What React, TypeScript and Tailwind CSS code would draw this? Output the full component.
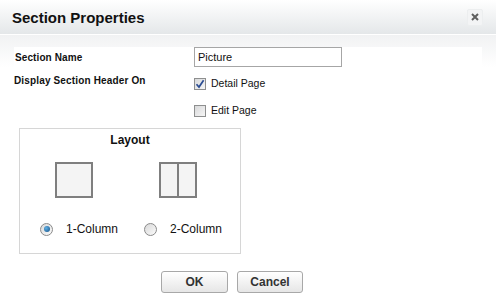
import { useState } from "react";

const Checkbox = ({ checked }: { checked: boolean }) => (
    <span className="flex items-center justify-center w-[12px] h-[12px] border border-[#8e8f8f] bg-[linear-gradient(135deg,#d8d9da,#f6f6f6)] shrink-0">
        {checked && (
            <svg width="10" height="10" viewBox="0 0 10 10">
                <path d="M1.5 5.2 L4 8 L8.6 1.2" fill="none" stroke="#2b4c92" strokeWidth="1.7" />
            </svg>
        )}
    </span>
);

const Radio = ({ checked }: { checked: boolean }) => (
    <span className="flex items-center justify-center w-[13px] h-[13px] rounded-full border border-[#8a8a8a] bg-[linear-gradient(135deg,#d9d9d9,#fbfbfb)] shrink-0">
        {checked && (
            <span className="w-[6px] h-[6px] rounded-full bg-[radial-gradient(circle_at_35%_35%,#5fb0e4,#134f86)]" />
        )}
    </span>
);

const App = () => {
    const [columns, setColumns] = useState(1);

    return (
        <div className="w-[496px] h-[308px] flex flex-col bg-white font-['Liberation_Sans',Arial,sans-serif] text-[#111]">
            <header className="flex items-center justify-between h-[35px] pl-[12px] pr-[13px] border-b border-white bg-[linear-gradient(#ffffff,#e4e7e9)]">
                <h1 className="text-[15px] font-bold leading-none">Section Properties</h1>
                <button className="flex items-center justify-center w-[16px] h-[17px] rounded-[2px] bg-[#f3f4f5] border border-[#eceeef]">
                    <svg width="8" height="8" viewBox="0 0 8 8">
                        <path d="M1 1 L7 7 M7 1 L1 7" stroke="#5f5f5f" strokeWidth="2" />
                    </svg>
                </button>
            </header>
            <main className="flex-1 px-[14px] pt-[12px] bg-[linear-gradient(#f1f2f3,#ffffff_32px)]">
                <div className="bg-white">
                    <div className="flex items-center h-[20px]">
                        <span className="w-[180px] pl-[1px] text-[10px] font-bold tracking-[0.1px]">Section Name</span>
                        <input
                            defaultValue="Picture"
                            className="w-[148px] h-[20px] px-[3px] border border-[#a6a6a6] text-[11px] outline-none"
                        />
                    </div>
                    <div className="flex mt-[9px]">
                        <span className="w-[180px] text-[10px] leading-[10px] font-bold tracking-[0.15px]">
                            Display Section Header On
                        </span>
                        <div className="flex flex-col gap-[15px] mt-[2px]">
                            <label className="flex items-center gap-[5px] h-[12px] text-[10.5px]">
                                <Checkbox checked />
                                Detail Page
                            </label>
                            <label className="flex items-center gap-[5px] h-[12px] text-[10.5px]">
                                <Checkbox checked={false} />
                                Edit Page
                            </label>
                        </div>
                    </div>
                    <section className="w-[222px] h-[126px] ml-[5px] mt-[11px] border border-[#d6d6d6] pt-[4px] pl-[20px]">
                        <h3 className="text-center text-[12px] leading-[14px] font-bold pr-[20px]">Layout</h3>
                        <div className="flex mt-[15px]">
                            <div className="w-[104px] shrink-0" onClick={() => setColumns(1)}>
                                <div className="ml-[15px] w-[38px] h-[36px] border-2 border-[#7f7f7f] bg-[#f4f4f4]" />
                                <div className="flex items-center gap-[13px] mt-[24px] h-[14px] text-[12px]">
                                    <Radio checked={columns === 1} />
                                    1-Column
                                </div>
                            </div>
                            <div className="w-[90px] shrink-0" onClick={() => setColumns(2)}>
                                <div className="flex ml-[15px] w-[38px] h-[36px] border-2 border-[#7f7f7f] bg-[#f4f4f4]">
                                    <div className="flex-1 border-r-2 border-[#7f7f7f]" />
                                    <div className="flex-1" />
                                </div>
                                <div className="flex items-center gap-[13px] mt-[24px] h-[14px] text-[12px]">
                                    <Radio checked={columns === 2} />
                                    2-Column
                                </div>
                            </div>
                        </div>
                    </section>
                    <div className="flex gap-[9px] ml-[147px] mt-[17px]">
                        <button className="w-[67px] h-[22px] rounded-[3px] border border-[#a8a8a8] bg-[linear-gradient(#ffffff,#e6e6e6)] text-[12px] font-bold text-[#333]">
                            OK
                        </button>
                        <button className="w-[66px] h-[22px] rounded-[3px] border border-[#a8a8a8] bg-[linear-gradient(#ffffff,#e6e6e6)] text-[12px] font-bold text-[#333]">
                            Cancel
                        </button>
                    </div>
                </div>
            </main>
        </div>
    );
};

export default App;
